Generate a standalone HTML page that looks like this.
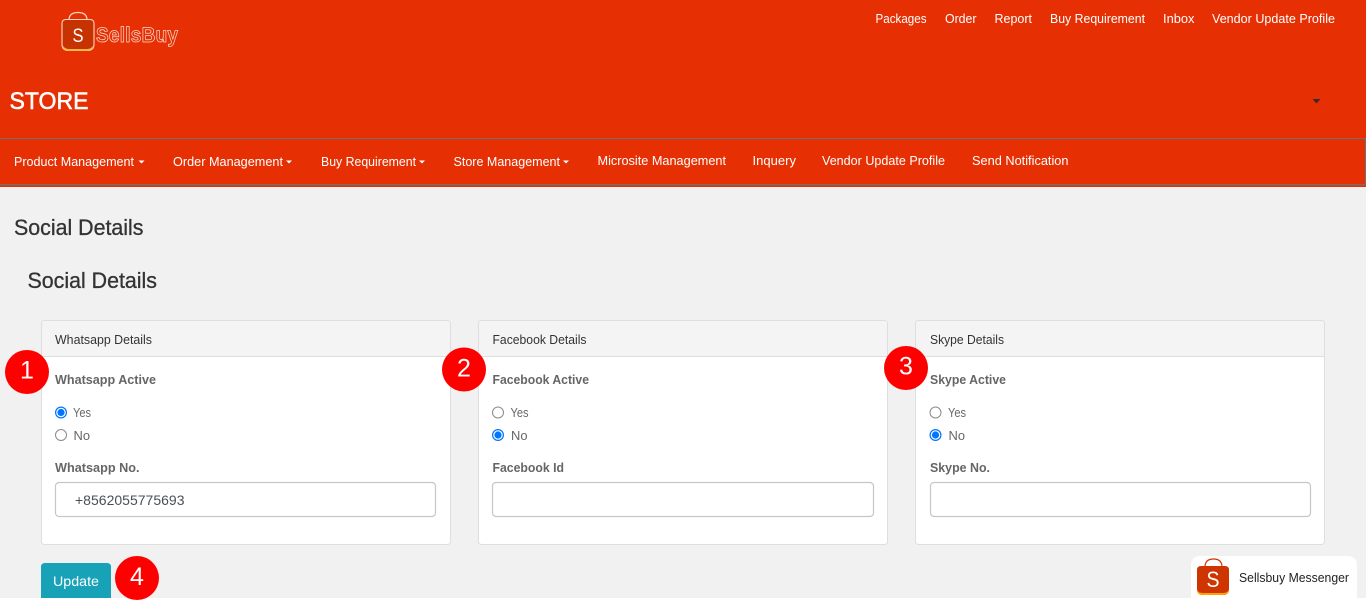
<!DOCTYPE html>
<html lang="en">
<head>
<meta charset="utf-8">
<title>Social Details</title>
<style>
html,body{margin:0;padding:0;width:1366px;height:610px;overflow:hidden;background:#fff}
svg{display:block}
text{font-family:"Liberation Sans",sans-serif}
.nav{font-size:13px;fill:#fff}
.h{font-size:22.5px;fill:#333;stroke:#333;stroke-width:.3}
.ch{font-size:13px;fill:#333}
.b{font-size:13px;font-weight:700;fill:#666}
.r{font-size:13px;fill:#666}
.n{font-size:25px;fill:#fff;text-anchor:middle}
.card{fill:#fff;stroke:#dedede}
.head{fill:#f4f4f4}
.inp{fill:#fff;stroke:#c6c6c6;stroke-width:1.2}
.off{fill:#fff;stroke:#8a8a8a;stroke-width:1}
.on{fill:#fff;stroke:#0075ff;stroke-width:1.2}
.dot{fill:#0075ff}
</style>
</head>
<body>
<svg width="1366" height="610" viewBox="0 0 1366 610" xmlns="http://www.w3.org/2000/svg">
<rect width="1366" height="598" fill="#f1f1f1"/>
<rect y="598" width="1366" height="12" fill="#fff"/>
<rect width="1366" height="187" fill="#e63003"/>
<rect y="138" width="1366" height="1" fill="#6f6f6f"/>
<rect y="184" width="1366" height="1.4" fill="#6f6f6f"/>
<rect x="1365" y="138" width="1" height="47" fill="#6f6f6f"/>

<!-- logo -->
<g>
<path d="M69 20Q69 12.5 78 12.5Q87 12.5 87 20" fill="none" stroke="#fbd3c4" stroke-width="1.2"/>
<path d="M66 19.5H90Q94 19.5 94 23.5V44Q94 50.5 87.5 50.5H68.5Q62 50.5 62 44V23.5Q62 19.5 66 19.5Z" fill="#c73300" stroke="#fbd3c4" stroke-width="1.1"/>
<path d="M62.5 45Q63.5 50.8 69 50.8H87Q92.5 50.8 93.5 45Q91.5 49 87 49H69Q64.5 49 62.5 45Z" fill="#ffb13c"/>
<text x="72.5" y="42" font-size="19.5" fill="#fff" textLength="11" lengthAdjust="spacingAndGlyphs">S</text>
<text transform="translate(96 42) scale(1 1.1)" x="0" y="0" font-size="19" font-weight="700" fill="#e63003" stroke="#fad6c8" stroke-width="0.7" textLength="82" lengthAdjust="spacing">SellsBuy</text>
</g>

<!-- top nav -->
<text class="nav" x="875.5" y="23" textLength="51" lengthAdjust="spacingAndGlyphs">Packages</text>
<text class="nav" x="945" y="23" textLength="31.5" lengthAdjust="spacingAndGlyphs">Order</text>
<text class="nav" x="994.5" y="23" textLength="37.5" lengthAdjust="spacingAndGlyphs">Report</text>
<text class="nav" x="1050" y="23" textLength="95" lengthAdjust="spacingAndGlyphs">Buy Requirement</text>
<text class="nav" x="1163" y="23" textLength="31.5" lengthAdjust="spacingAndGlyphs">Inbox</text>
<text class="nav" x="1212" y="23" textLength="123" lengthAdjust="spacingAndGlyphs">Vendor Update Profile</text>

<text x="9.5" y="109" font-size="24.5" fill="#fff" stroke="#fff" stroke-width=".55" textLength="79" lengthAdjust="spacingAndGlyphs">STORE</text>
<path d="M1312.5 99H1320.5L1316.5 103.5Z" fill="#3a2a28"/>

<!-- main menu -->
<text class="nav" x="14" y="166" textLength="120" lengthAdjust="spacingAndGlyphs">Product Management</text>
<path d="M138.5 160.5H144.5L141.5 163.5Z" fill="#fff"/>
<text class="nav" x="173" y="166" textLength="110" lengthAdjust="spacingAndGlyphs">Order Management</text>
<path d="M286 160.5H292L289 163.5Z" fill="#fff"/>
<text class="nav" x="321" y="166" textLength="95" lengthAdjust="spacingAndGlyphs">Buy Requirement</text>
<path d="M419 160.5H425L422 163.5Z" fill="#fff"/>
<text class="nav" x="453.5" y="166" textLength="106.5" lengthAdjust="spacingAndGlyphs">Store Management</text>
<path d="M563 160.5H569L566 163.5Z" fill="#fff"/>
<text class="nav" x="597.5" y="165" textLength="128.5" lengthAdjust="spacingAndGlyphs">Microsite Management</text>
<text class="nav" x="752.5" y="165" textLength="43.5" lengthAdjust="spacingAndGlyphs">Inquery</text>
<text class="nav" x="822" y="165" textLength="123" lengthAdjust="spacingAndGlyphs">Vendor Update Profile</text>
<text class="nav" x="972" y="165" textLength="96.5" lengthAdjust="spacingAndGlyphs">Send Notification</text>

<!-- headings -->
<text class="h" x="14" y="235" textLength="129.5" lengthAdjust="spacingAndGlyphs">Social Details</text>
<text class="h" x="27.5" y="288" textLength="129.5" lengthAdjust="spacingAndGlyphs">Social Details</text>

<!-- card 1 -->
<rect class="card" x="41.5" y="320.5" width="409" height="224" rx="3"/>
<path class="head" d="M42 357V324Q42 321 45 321H447Q450 321 450 324V357Z"/>
<rect x="42" y="356" width="408" height="1" fill="#dedede"/>
<text class="ch" x="55" y="344" textLength="97" lengthAdjust="spacingAndGlyphs">Whatsapp Details</text>
<text class="b" x="55" y="384" textLength="101" lengthAdjust="spacingAndGlyphs">Whatsapp Active</text>
<circle class="on" cx="61" cy="412.5" r="5.4"/><circle class="dot" cx="61" cy="412.5" r="3.6"/>
<text class="r" x="73" y="417" textLength="18" lengthAdjust="spacingAndGlyphs">Yes</text>
<circle class="off" cx="61" cy="435" r="5.5"/>
<text class="r" x="73.5" y="440" textLength="16.5" lengthAdjust="spacingAndGlyphs">No</text>
<text class="b" x="55" y="472" textLength="84.5" lengthAdjust="spacingAndGlyphs">Whatsapp No.</text>
<rect class="inp" x="55.5" y="482.5" width="380" height="34" rx="3.5"/>
<text x="75" y="505" font-size="14" fill="#495057" textLength="109.5">+8562055775693</text>

<!-- card 2 -->
<rect class="card" x="478.5" y="320.5" width="409" height="224" rx="3"/>
<path class="head" d="M479 357V324Q479 321 482 321H884Q887 321 887 324V357Z"/>
<rect x="479" y="356" width="408" height="1" fill="#dedede"/>
<text class="ch" x="492.5" y="344" textLength="94" lengthAdjust="spacingAndGlyphs">Facebook Details</text>
<text class="b" x="492.5" y="384" textLength="96.5" lengthAdjust="spacingAndGlyphs">Facebook Active</text>
<circle class="off" cx="498" cy="412.5" r="5.5"/>
<text class="r" x="510.5" y="417" textLength="18" lengthAdjust="spacingAndGlyphs">Yes</text>
<circle class="on" cx="498" cy="435" r="5.4"/><circle class="dot" cx="498" cy="435" r="3.6"/>
<text class="r" x="511" y="440" textLength="16.5" lengthAdjust="spacingAndGlyphs">No</text>
<text class="b" x="492.5" y="472" textLength="71.5" lengthAdjust="spacingAndGlyphs">Facebook Id</text>
<rect class="inp" x="492.5" y="482.5" width="381" height="34" rx="3.5"/>

<!-- card 3 -->
<rect class="card" x="915.5" y="320.5" width="409" height="224" rx="3"/>
<path class="head" d="M916 357V324Q916 321 919 321H1321Q1324 321 1324 324V357Z"/>
<rect x="916" y="356" width="408" height="1" fill="#dedede"/>
<text class="ch" x="930" y="344" textLength="74" lengthAdjust="spacingAndGlyphs">Skype Details</text>
<text class="b" x="930" y="384" textLength="76" lengthAdjust="spacingAndGlyphs">Skype Active</text>
<circle class="off" cx="935.5" cy="412.5" r="5.5"/>
<text class="r" x="948" y="417" textLength="18" lengthAdjust="spacingAndGlyphs">Yes</text>
<circle class="on" cx="935.5" cy="435" r="5.4"/><circle class="dot" cx="935.5" cy="435" r="3.6"/>
<text class="r" x="948.5" y="440" textLength="16.5" lengthAdjust="spacingAndGlyphs">No</text>
<text class="b" x="930" y="472" textLength="60" lengthAdjust="spacingAndGlyphs">Skype No.</text>
<rect class="inp" x="930.5" y="482.5" width="380" height="34" rx="3.5"/>

<!-- button -->
<path d="M41 598V567Q41 563 45 563H107Q111 563 111 567V598Z" fill="#17a2b8"/>
<text x="53" y="586" font-size="14" fill="#fff" textLength="46" lengthAdjust="spacingAndGlyphs">Update</text>

<!-- badges -->
<circle cx="27" cy="372" r="22" fill="#f00"/>
<text class="n" x="27" y="378.5">1</text>
<circle cx="464" cy="369.5" r="22" fill="#f00"/>
<text class="n" x="464" y="376.7">2</text>
<circle cx="906" cy="368" r="22" fill="#f00"/>
<text class="n" x="906" y="374.5">3</text>
<circle cx="137" cy="578" r="22" fill="#f00"/>
<text class="n" x="137" y="585">4</text>

<!-- messenger -->
<path d="M1191 598V566Q1191 556 1201 556H1347Q1357 556 1357 566V598Z" fill="#fff"/>
<path d="M1205 567Q1205 559 1213.5 559Q1222 559 1222 567" fill="none" stroke="#cf3500" stroke-width="1.2"/>
<path d="M1201 566H1225Q1229 566 1229 570V589Q1229 595 1223 595H1203Q1197 595 1197 589V570Q1197 566 1201 566Z" fill="#cf3500"/>
<path d="M1197 589Q1197.5 595 1203 595H1223Q1228.5 595 1229 589Q1228 593 1223 593H1203Q1198 593 1197 589Z" fill="#ffa200"/>
<text x="1206.5" y="587" font-size="22" fill="#fff" textLength="13" lengthAdjust="spacingAndGlyphs">S</text>
<text x="1239" y="582" font-size="13" fill="#222" textLength="110" lengthAdjust="spacingAndGlyphs">Sellsbuy Messenger</text>
</svg>
</body>
</html>
